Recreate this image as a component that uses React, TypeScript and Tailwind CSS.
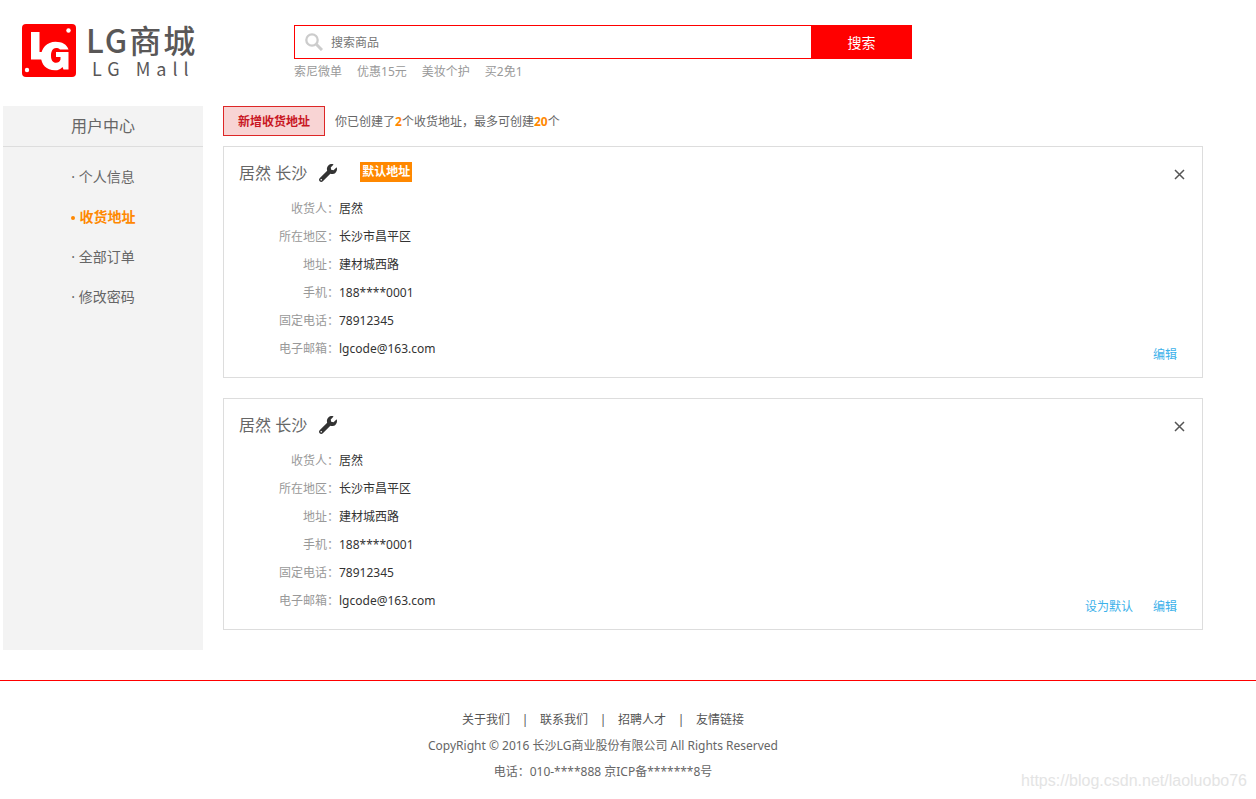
import React from "react";
import { FaWrench } from "react-icons/fa";

type Address = { id: number; title: string; isDefault: boolean; fields: [string, string][] };

const fields: [string, string][] = [
  ["收货人：", "居然"],
  ["所在地区：", "长沙市昌平区"],
  ["地址：", "建材城西路"],
  ["手机：", "188****0001"],
  ["固定电话：", "78912345"],
  ["电子邮箱：", "lgcode@163.com"],
];

const addresses: Address[] = [
  { id: 1, title: "居然 长沙", isDefault: true, fields },
  { id: 2, title: "居然 长沙", isDefault: false, fields },
];

const menu = ["个人信息", "收货地址", "全部订单", "修改密码"];
const hotWords = ["索尼微单", "优惠15元", "美妆个护", "买2免1"];
const footerLinks = ["关于我们", "联系我们", "招聘人才", "友情链接"];

function Logo() {
  return (
    <a href="#" className="flex w-[291px] shrink-0 gap-[10px] pt-6 pl-[19px] font-['Noto_Sans_CJK_SC',sans-serif] text-[#595757]">
      <svg width="54" height="53" viewBox="0 0 54 53" className="shrink-0" aria-hidden="true">
        <rect width="54" height="53" rx="4" fill="#f00" />
        <path d="M9 8h8.500v20h4v7.500H9z" fill="#fff" />
        <path
          d="M46.500 28V45.500H41.500L40.500 43C38.500 45.500 36 46.300 33 46.300C24.500 46.300 19 40.500 19 32.500S25 17.800 33.500 17.800C40 17.800 45 20.500 46.500 25.500H38C37 24.400 35.500 24 34 24C31 24 29 27 29 31.800C29 36.500 31 38.800 34 38.800C36.200 38.800 37.800 37.800 38.500 35.500V33H34V28Z"
          fill="#fff"
        />
        <circle cx="46.500" cy="6.500" r="2.200" fill="#fff" />
        <circle cx="5" cy="46" r="2.200" fill="#fff" />
      </svg>
      <span className="flex flex-col gap-1">
        <span className="text-[32px] leading-[30px] font-medium tracking-[2px]">LG商城</span>
        <span className="pl-[6px] text-lg leading-5 tracking-[6px]">LG Mall</span>
      </span>
    </a>
  );
}

function Header() {
  return (
    <header className="flex h-[106px]">
      <Logo />
      <div className="w-[618px] pt-[25px]">
        <form className="flex h-[34px]" onSubmit={(e) => e.preventDefault()}>
          <label className="flex flex-1 items-center gap-2 border border-r-0 border-[#f00] pl-[10px]">
            <svg width="18" height="18" viewBox="0 0 18 18" fill="none" stroke="#ccc" className="shrink-0" aria-hidden="true">
              <circle cx="7" cy="7" r="5.700" strokeWidth="2.300" />
              <path d="M11.500 11.500L17 17" strokeWidth="3" />
            </svg>
            <input
              type="text"
              aria-label="搜索商品"
              placeholder="搜索商品"
              className="w-full min-w-0 bg-transparent pt-[2px] outline-none placeholder:text-[#757575]"
            />
          </label>
          <button type="submit" className="w-[101px] bg-[#f00] pt-[2px] text-sm text-white">搜索</button>
        </form>
        <nav className="flex gap-[15px] pt-[3px] leading-5 text-[#999]">
          {hotWords.map((word) => (
            <a key={word} href="#">{word}</a>
          ))}
        </nav>
      </div>
    </header>
  );
}

function Sidebar() {
  return (
    <aside className="w-[200px] shrink-0 bg-[#f3f3f3] text-center">
      <h2 className="border-b border-[#ddd] text-base leading-10">用户中心</h2>
      <ul className="pt-[10px] text-sm leading-10">
        {menu.map((item) => (
          <li key={item}>
            {item === "收货地址" ? (
              <a href="#" className="font-bold text-[#ff8800]" aria-current="page">
                <span className="mr-[5px] inline-block size-1 rounded-full bg-[#ff8800] align-middle" />
                {item}
              </a>
            ) : (
              <a href="#">· {item}</a>
            )}
          </li>
        ))}
      </ul>
    </aside>
  );
}

function AddressCard({ address }: { address: Address }) {
  return (
    <section className="mb-5 border border-[#ddd] px-[15px] pb-[10px]">
      <div className="flex h-12 items-center pt-1">
        <h3 className="text-base leading-6">{address.title}</h3>
        <FaWrench size={18} className="ml-3 text-[#333]" />
        {address.isDefault && (
          <span className="mb-[2px] ml-[23px] bg-[#ff8800] px-[2px] leading-5 font-bold text-white">默认地址</span>
        )}
        <button type="button" aria-label="删除" className="mt-[2px] ml-auto p-[2px] text-[#555]">
          <svg width="11" height="11" viewBox="0 0 11 11" stroke="currentColor" strokeWidth="1.500" aria-hidden="true">
            <path d="M1 1l9 9M10 1L1 10" />
          </svg>
        </button>
      </div>
      <div className="flex items-end justify-between">
        <dl className="mb-1 leading-7">
          {address.fields.map(([label, value]) => (
            <div key={label} className="flex">
              <dt className="w-[100px] text-right text-[#999]">{label}</dt>
              <dd className="text-[#333]">{value}</dd>
            </div>
          ))}
        </dl>
        <div className="flex gap-5 pr-[10px] leading-6 text-[#3cb1ea]">
          {!address.isDefault && <a href="#">设为默认</a>}
          <a href="#">编辑</a>
        </div>
      </div>
    </section>
  );
}

function Footer() {
  return (
    <footer className="mt-[30px] border-t border-[#f00] pt-[26px] leading-[26px]">
      <div className="ml-[3px] max-w-[1200px] text-center">
        <ul className="flex justify-center text-[#555]">
          {footerLinks.map((link, i) => (
            <li key={link} className="flex">
              {i > 0 && <span className="w-[30px]">|</span>}
              <a href="#">{link}</a>
            </li>
          ))}
        </ul>
        <p>CopyRight © 2016 长沙LG商业股份有限公司 All Rights Reserved</p>
        <p>电话：010-****888 京ICP备*******8号</p>
      </div>
    </footer>
  );
}

export default function App() {
  return (
    <div className="relative min-h-screen bg-white font-['Noto_Sans','Noto_Sans_CJK_SC',sans-serif] text-xs text-[#666]">
      <div className="ml-[3px] max-w-[1200px]">
        <Header />
        <div className="flex gap-5">
          <Sidebar />
          <main className="flex-1">
            <div className="mb-[10px] flex items-center gap-[10px]">
              <button type="button" className="h-[30px] w-[102px] border border-[#dd2727] bg-[#f8d4d4] pt-[2px] font-bold text-[#c81623]">
                新增收货地址
              </button>
              <p className="pt-[2px]">
                你已创建了<b className="text-[#ff8800]">2</b>个收货地址，最多可创建<b className="text-[#ff8800]">20</b>个
              </p>
            </div>
            {addresses.map((address) => (
              <AddressCard key={address.id} address={address} />
            ))}
          </main>
        </div>
      </div>
      <Footer />
      <span className="absolute right-[9px] bottom-[6px] font-['Liberation_Sans',sans-serif] text-base text-[#e4e4e4]">
        https://blog.csdn.net/laoluobo76
      </span>
    </div>
  );
}
